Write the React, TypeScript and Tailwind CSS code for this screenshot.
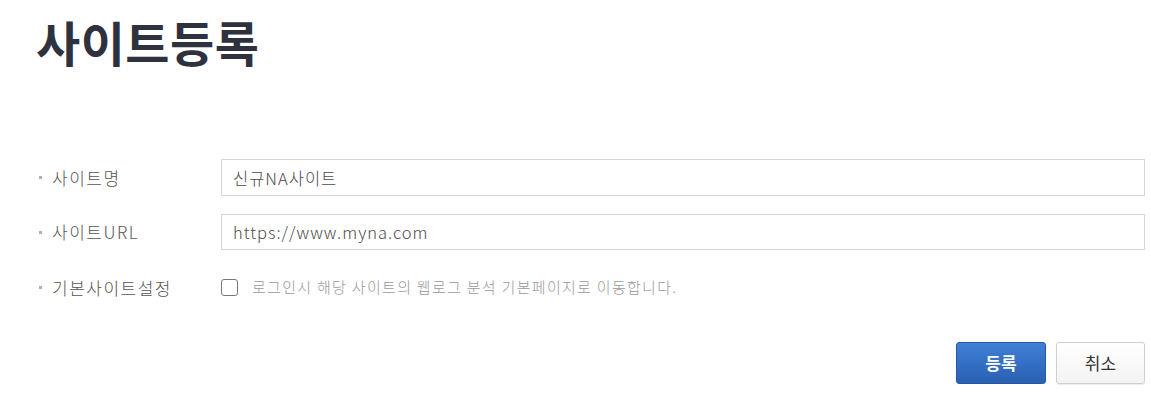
export default function App() {
  const font = { fontFamily: '"Noto Sans CJK KR", "Noto Sans", sans-serif' };
  return (
    <div
      className="w-[1151px] h-[397px] bg-white pl-[36px] pr-[6px] overflow-hidden"
      style={font}
    >
      <h1 className="pt-[17px] text-[48px] font-bold leading-none tracking-[0.5px] text-[#2e323e]">
        사이트등록
      </h1>

      <div className="mt-[94px] flex flex-col">
        <div className="flex items-center h-[37px]">
          <Label text="사이트명" />
          <input
            readOnly
            defaultValue="신규NA사이트"
            className="flex-1 h-full border border-[#d6d6d6] px-[11px] text-[16.5px] font-light tracking-[1px] text-[#4a4a4a] outline-none"
            style={font}
          />
        </div>

        <div className="mt-[18px] flex items-center h-[36px]">
          <Label text="사이트URL" />
          <input
            readOnly
            defaultValue="https://www.myna.com"
            className="flex-1 h-full border border-[#d6d6d6] px-[11px] text-[16.5px] font-light tracking-[1px] text-[#4a4a4a] outline-none"
            style={font}
          />
        </div>

        <div className="mt-[19px] flex items-center h-[37px]">
          <Label text="기본사이트설정" />
          <div className="flex items-center">
            <span className="w-[17px] h-[17px] rounded-[3px] border-[1.5px] border-[#777] bg-white" />
            <span className="ml-[14px] text-[15px] font-light tracking-[1.3px] text-[#999]">
              로그인시 해당 사이트의 웹로그 분석 기본페이지로 이동합니다.
            </span>
          </div>
        </div>
      </div>

      <div className="mt-[36px] flex justify-end gap-[10px]">
        <button className="w-[90px] h-[42px] rounded-[3px] border border-[#2559a8] bg-gradient-to-b from-[#3f80d6] to-[#2a60b2] text-[17px] font-bold text-white">
          등록
        </button>
        <button className="w-[89px] h-[42px] rounded-[3px] border border-[#cfcfcf] bg-gradient-to-b from-white to-[#f3f3f3] text-[17px] text-[#333] shadow-[0_1px_1px_rgba(0,0,0,0.08)]">
          취소
        </button>
      </div>
    </div>
  );
}

function Label({ text }: { text: string }) {
  return (
    <div className="w-[185px] flex items-center shrink-0">
      <span className="ml-[3px] w-[3px] h-[3px] bg-[#b0b0b0]" />
      <span className="ml-[10px] text-[17px] font-light tracking-[1.5px] text-[#555]">{text}</span>
    </div>
  );
}
